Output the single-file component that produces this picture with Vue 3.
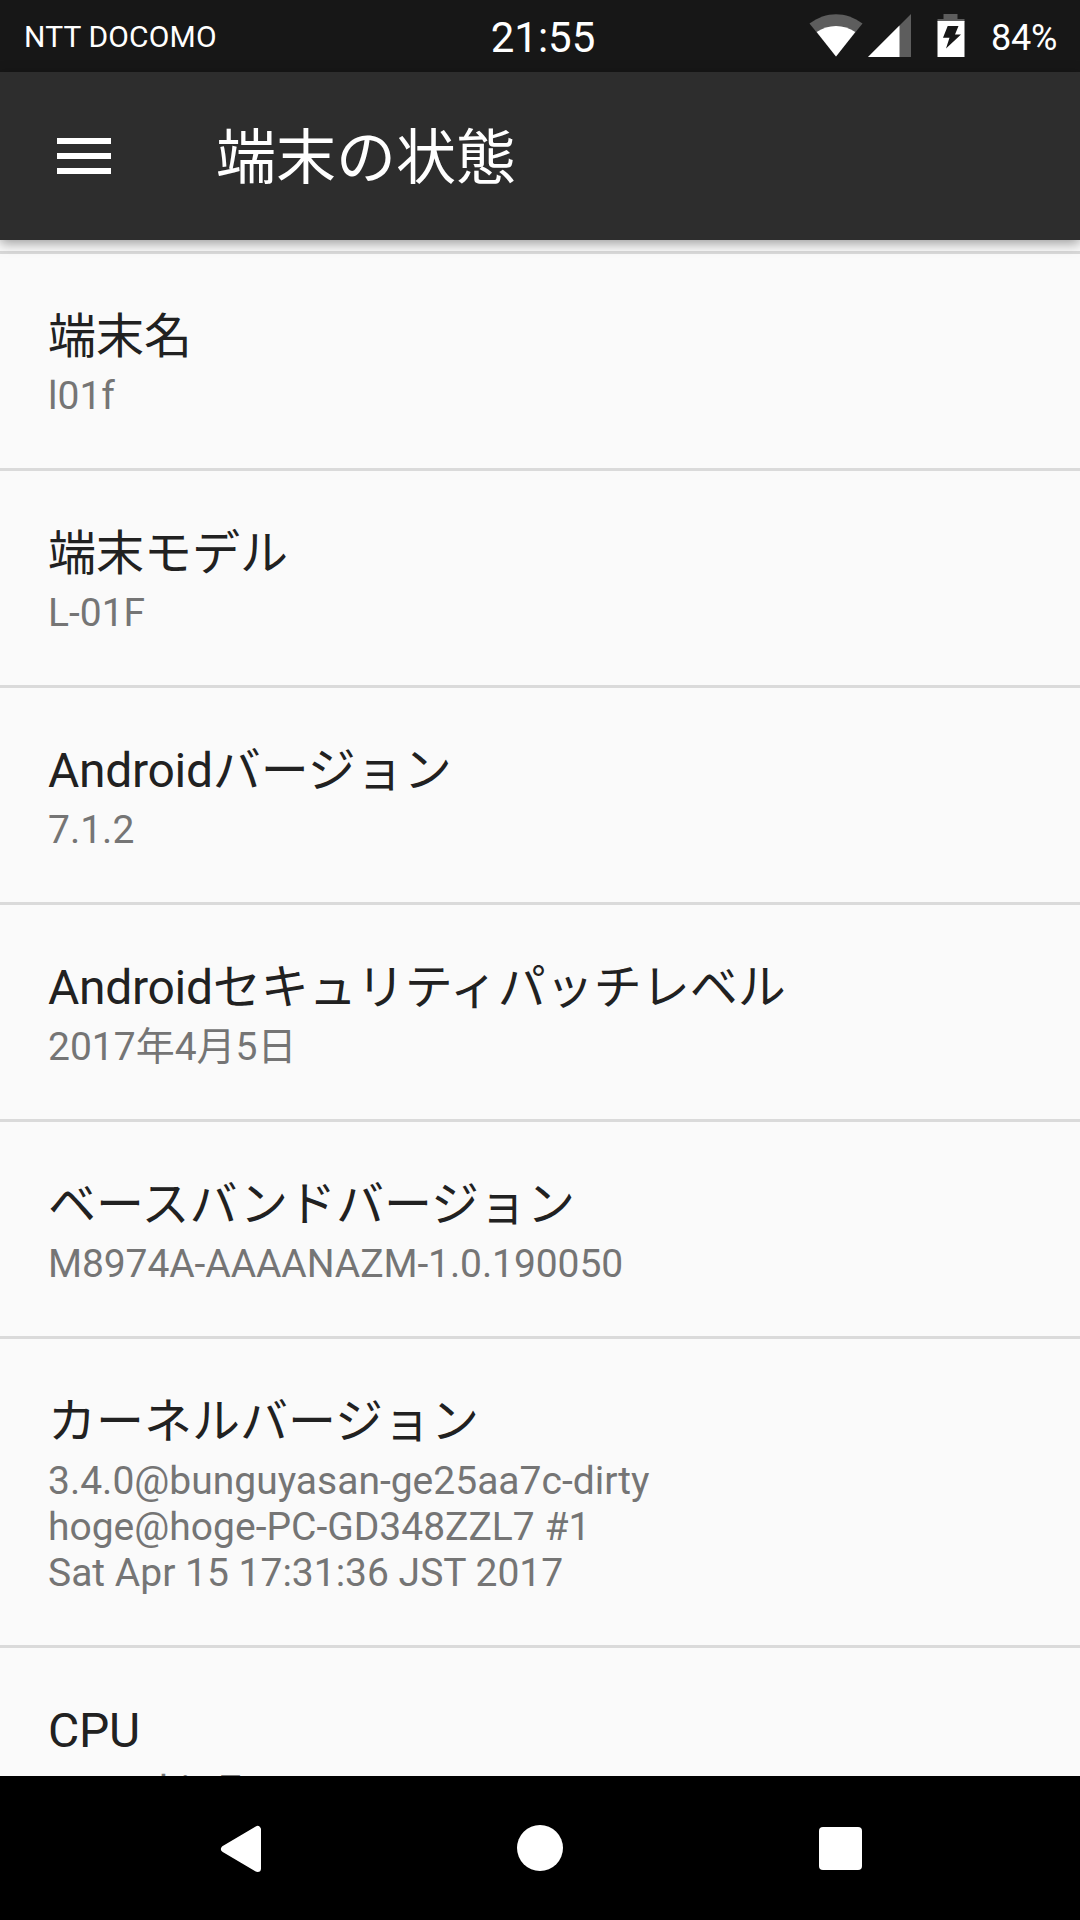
<script setup>
const items = [
  { title: '端末名', lines: ['l01f'] },
  { title: '端末モデル', lines: ['L-01F'] },
  { latin: 'Android', title: 'バージョン', lines: ['7.1.2'] },
  { latin: 'Android', title: 'セキュリティパッチレベル', lines: ['2017年4月5日'] },
  { title: 'ベースバンドバージョン', lines: ['M8974A-AAAANAZM-1.0.190050'], tight: true },
  {
    title: 'カーネルバージョン',
    lines: [
      '3.4.0@bunguyasan-ge25aa7c-dirty',
      'hoge@hoge-PC-GD348ZZL7 #1',
      'Sat Apr 15 17:31:36 JST 2017',
    ],
  },
  { latin: 'CPU', title: '', lines: ['macrohis 7'] },
]
</script>

<template>
  <div class="screen" lang="ja">
    <header class="status">
      <span class="carrier">NTT DOCOMO</span>
      <span class="clock">21:55</span>
      <div class="tray">
        <svg class="wifi" width="54" height="44" viewBox="0 0 54 44">
          <path d="M.5 9.5C17 -3 37 -3 53.500 9.500L27 42.500Z" fill="#5d5d5d" />
          <path d="M7.700 18C19 10 35 10 46.300 18L27 42.500Z" fill="#fff" />
        </svg>
        <svg class="cell" width="44" height="44" viewBox="0 0 44 44">
          <path d="M0 43L43 0V43Z" fill="#5d5d5d" />
          <path d="M0 43L31.500 11.500V43Z" fill="#fff" />
        </svg>
        <svg class="battery" width="28" height="44" viewBox="0 0 28 44">
          <path d="M6.500 0H20.500V5H27.500V8H.5V5H6.500Z" fill="#5d5d5d" />
          <path d="M.5 7H27.500V43H.5ZM10.700 12L6 23.700H12.500L9 34.500L24 20.500H18L21.500 12Z" fill="#fff" fill-rule="evenodd" />
        </svg>
        <span class="percent">84%</span>
      </div>
    </header>

    <div class="toolbar">
      <div class="menu"><i></i><i></i><i></i></div>
      <h1>端末の状態</h1>
    </div>

    <main class="list">
      <section v-for="(item, n) in items" :key="n" class="row" :class="{ tight: item.tight }">
        <h2><span v-if="item.latin" class="latin">{{ item.latin }}</span>{{ item.title }}</h2>
        <p v-for="line in item.lines" :key="line">{{ line }}</p>
      </section>
    </main>

    <nav class="nav">
      <svg width="42" height="48" viewBox="0 0 42 48">
        <path d="M4.500 24L37.500 4.500V43.500Z" fill="#fff" stroke="#fff" stroke-width="7" stroke-linejoin="round" />
      </svg>
      <span class="home"></span>
      <span class="recent"></span>
    </nav>
  </div>
</template>

<style>
body {
  margin: 0;
}
</style>

<style scoped>
.screen {
  width: 1080px;
  height: 1920px;
  display: flex;
  flex-direction: column;
  overflow: hidden;
  background: #fafafa;
  font-family: Roboto, "Noto Sans CJK JP", sans-serif;
}
.status {
  flex: none;
  height: 72px;
  box-sizing: border-box;
  padding: 0 24px;
  display: grid;
  grid-template-columns: 1fr auto 1fr;
  align-items: center;
  background: #171717;
  color: #fff;
}
.carrier {
  font-size: 30px;
  line-height: 36px;
  letter-spacing: 0.15px;
  padding-top: 2px;
}
.clock {
  font-size: 42px;
  line-height: 50px;
  padding: 4px 0 0 6px;
}
.tray {
  display: flex;
  justify-content: flex-end;
  align-items: center;
}
.cell {
  margin-left: 5px;
}
.battery {
  margin-left: 25px;
}
.percent {
  margin-left: 26px;
  margin-right: -1px;
  font-size: 36px;
  line-height: 42px;
  letter-spacing: -0.3px;
  padding-top: 3px;
}
.toolbar {
  flex: none;
  height: 168px;
  display: flex;
  align-items: center;
  background: #2d2d2d;
  color: #fff;
  position: relative;
  box-shadow: 0 3px 12px rgba(0, 0, 0, 0.4);
}
.menu {
  width: 54px;
  margin-left: 57px;
  display: flex;
  flex-direction: column;
  gap: 9px;
}
.menu i {
  height: 6px;
  background: #fff;
}
h1 {
  margin: 0 0 0 105px;
  padding-top: 6px;
  font-size: 60px;
  line-height: 70px;
  font-weight: 400;
}
.list {
  flex: 1;
  min-height: 0;
  overflow: hidden;
  padding-top: 11px;
}
.row {
  border-top: 3px solid #dadada;
  padding: 55px 48px 49px;
}
h2 {
  margin: 0 0 8px;
  font-size: 48px;
  line-height: 56px;
  font-weight: 400;
  color: #212121;
}
.latin {
  letter-spacing: -0.3px;
}
p {
  margin: 0;
  font-size: 39px;
  line-height: 46px;
  color: #757575;
}
.tight p {
  letter-spacing: -0.09px;
}
.nav {
  flex: none;
  height: 144px;
  display: flex;
  align-items: center;
  background: #000;
}
.nav svg {
  margin-left: 220px;
  padding-top: 1px;
}
.home {
  width: 46px;
  height: 46px;
  margin-left: 255px;
  border-radius: 50%;
  background: #fff;
}
.recent {
  width: 43px;
  height: 43px;
  margin-left: 256px;
  border-radius: 4px;
  background: #fff;
}
</style>
